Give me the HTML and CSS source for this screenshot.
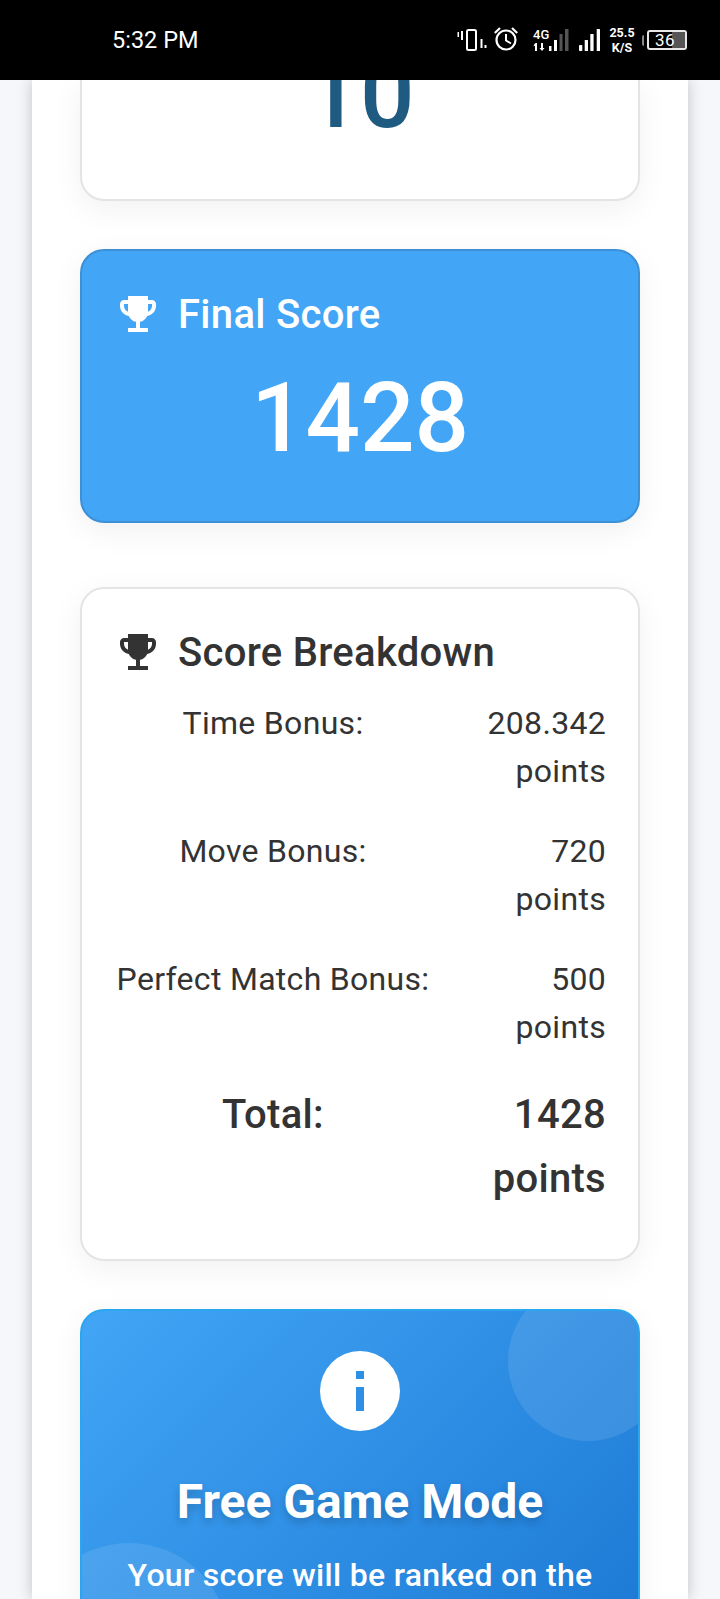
FILE: index.html
```html
<!DOCTYPE html>
<html lang="en">
<head>
<meta charset="utf-8">
<title>Game Result</title>
<link rel="stylesheet" href="styles.css">
</head>
<body>
<header class="status">
  <span class="time">5:32 PM</span>
  <div class="status-icons">
    <svg class="ic-vib" viewBox="0 0 30 24" width="30" height="24"><g fill="#fff"><rect x=".5" y="4" width="1.500" height="5"/><rect x="4" y="3" width="2" height="9"/><rect x="23.500" y="11" width="2" height="9"/><rect x="27.500" y="17" width="2" height="3"/></g><rect x="10" y="2" width="9" height="20" rx="1.500" fill="none" stroke="#fff" stroke-width="2"/></svg>
    <svg class="ic-alarm" viewBox="0 0 24 26" width="24" height="26"><circle cx="12" cy="14" r="9.500" fill="none" stroke="#fff" stroke-width="2.200"/><path d="M12 8v6.500l5 3" fill="none" stroke="#fff" stroke-width="2"/><path d="M.8 7 6 2M23.200 7 18 2" stroke="#fff" stroke-width="2.200"/></svg>
    <div class="net">
      <span class="net-4g">4G</span>
      <svg viewBox="0 0 37 24" width="37" height="24"><g fill="#fff"><path d="M3 23v-5.500L1.800 18.500v-1.500L3.500 15H5v8z"/><path d="M9 15h2v5h1.500L10 23l-2.500-3H9z"/><rect x="17" y="18" width="2.500" height="5"/><rect x="22" y="12" width="3" height="11"/></g><g fill="#555"><rect x="27.500" y="6" width="3" height="17"/><rect x="33" y="1" width="3.500" height="22"/></g></svg>
    </div>
    <svg class="ic-sig" viewBox="0 0 21 22" width="21" height="22"><g fill="#fff"><rect x="0" y="16" width="3.300" height="6" rx=".8"/><rect x="5.700" y="11" width="3.300" height="11" rx=".5"/><rect x="11.300" y="5" width="3.300" height="17" rx=".5"/><rect x="17.700" y="0" width="3.300" height="22" rx=".5"/></g></svg>
    <div class="speed"><span>25.5</span><span>K/S</span></div>
    <div class="battery"><span class="bat-cap"></span><div class="bat-body"><span class="bat-fill"></span><span class="bat-num">36</span></div></div>
  </div>
</header>
<div class="page">
  <main class="container">
    <section class="card stub"><div class="stub-value">10</div></section>

    <section class="card final">
      <h2 class="card-title">
        <svg class="trophy" viewBox="3 3 18 18"><path fill="currentColor" d="M19 5h-2V3H7v2H5c-1.100 0-2 .9-2 2v1c0 2.550 1.920 4.630 4.390 4.940.63 1.500 1.980 2.630 3.610 2.960V19H7v2h10v-2h-4v-3.100c1.630-.33 2.980-1.460 3.610-2.960C19.080 12.630 21 10.550 21 8V7c0-1.100-.9-2-2-2zM5 8V7h2v3.820C5.840 10.400 5 9.300 5 8zm14 0c0 1.300-.84 2.400-2 2.820V7h2v1z"/></svg>
        Final Score
      </h2>
      <div class="final-value">1428</div>
    </section>

    <section class="card breakdown">
      <h2 class="card-title">
        <svg class="trophy" viewBox="3 3 18 18"><path fill="currentColor" d="M19 5h-2V3H7v2H5c-1.100 0-2 .9-2 2v1c0 2.550 1.920 4.630 4.390 4.940.63 1.500 1.980 2.630 3.610 2.960V19H7v2h10v-2h-4v-3.100c1.630-.33 2.980-1.460 3.610-2.960C19.080 12.630 21 10.550 21 8V7c0-1.100-.9-2-2-2zM5 8V7h2v3.820C5.840 10.400 5 9.300 5 8zm14 0c0 1.300-.84 2.400-2 2.820V7h2v1z"/></svg>
        Score Breakdown
      </h2>
      <div class="row"><span class="label">Time Bonus:</span><span class="value">208.342 points</span></div>
      <div class="row"><span class="label">Move Bonus:</span><span class="value">720 points</span></div>
      <div class="row"><span class="label">Perfect Match Bonus:</span><span class="value">500 points</span></div>
      <div class="row total"><span class="label">Total:</span><span class="value">1428 points</span></div>
    </section>

    <section class="card free">
      <span class="blob blob-a"></span>
      <span class="blob blob-b"></span>
      <div class="info-icon"><span class="info-dot"></span><span class="info-stem"></span></div>
      <h2 class="free-title">Free Game Mode</h2>
      <p class="free-text">Your score will be ranked on the leaderboard</p>
    </section>
  </main>
</div>
</body>
</html>
```
FILE: styles.css
```css
* { box-sizing: border-box; }
html, body { margin: 0; height: 1599px; overflow: hidden; }
body { background: #f5f7fb; font-family: Roboto, sans-serif; color: #333; line-height: 1.6; letter-spacing: .3px; display: flex; flex-direction: column; }

.status { height: 80px; flex: none; background: #000; color: #fff; display: flex; align-items: center; justify-content: space-between; position: relative; z-index: 2; padding: 0 33px 0 112px; letter-spacing: 0; }
.time { font-size: 23.500px; line-height: 1; margin-top: 2px; }
.status-icons { display: flex; align-items: center; }
.ic-alarm { margin-left: 7px; margin-top: -2px; }
.net { position: relative; width: 37px; height: 24px; margin-left: 14px; }
.net svg { display: block; }
.net-4g { position: absolute; left: 1px; top: 0; font-size: 13px; font-weight: 500; line-height: 13px; }
.ic-sig { margin-left: 10px; }
.speed { display: flex; flex-direction: column; align-items: center; width: 26px; margin-left: 9px; font-size: 12.500px; font-weight: 700; line-height: 15px; }
.battery { display: flex; align-items: center; gap: 3px; margin-left: 7px; }
.bat-cap { width: 2px; height: 11px; background: #888; border-radius: 2px 0 0 2px; }
.bat-body { width: 40px; height: 20px; border: 2px solid #e8e8e8; border-radius: 3px; position: relative; display: flex; justify-content: center; align-items: center; padding-right: 4px; }
.bat-fill { position: absolute; right: 0; top: 0; bottom: 0; width: 13px; background: #555; }
.bat-num { position: relative; font-size: 17px; line-height: 1; letter-spacing: .5px; }

.page { flex: 1; min-height: 0; }
.container { width: 656px; margin: 0 auto 0 32px; height: 100%; background: #fff; box-shadow: 0 0 14px rgba(0,0,0,.22); padding: 0 48px; display: flex; flex-direction: column; gap: 48px; overflow: hidden; }

.card { flex: none; border: 2px solid #e4e4e4; border-radius: 24px; background: #fff; padding: 32px; box-shadow: 0 8px 32px rgba(0,0,0,.06); }

.stub { height: 122px; margin-top: -1px; border-top: 0; border-top-left-radius: 0; border-top-right-radius: 0; padding: 0; overflow: hidden; text-align: center; }
.stub-value { font-size: 96px; font-weight: 500; line-height: 1; color: #1f5a80; margin-top: -33px; letter-spacing: 0; }

.card-title { display: flex; align-items: center; gap: 22px; margin: 0 0 14px; font-size: 40px; font-weight: 500; line-height: 64px; padding-left: 6px; }
.trophy { width: 36px; height: 36px; flex: none; margin-top: -2px; }

.final { height: 274px; margin-bottom: 16px; background: #42a5f5; border-color: #3d8fd6; color: #fff; }
.final-value { font-size: 96px; line-height: 1.2; text-align: center; font-weight: 500; letter-spacing: 0; }

.row { display: grid; grid-template-columns: 318px 1fr; font-size: 32px; line-height: 48px; margin-bottom: 32px; }
.label { text-align: center; }
.value { width: 125px; justify-self: end; text-align: right; }
.total { font-size: 40px; font-weight: 500; line-height: 64px; margin-bottom: 16px; }

.free { position: relative; overflow: hidden; height: 400px; padding: 40px 32px; border-color: #29a6ee; background: linear-gradient(135deg, #42a5f5, #1976d2); color: #fff; text-align: center; }
.blob { position: absolute; border-radius: 50%; background: rgba(255,255,255,.1); }
.blob-a { width: 160px; height: 160px; top: -30px; right: -30px; }
.blob-b { width: 200px; height: 200px; top: 232px; left: -53px; }
.info-icon { position: relative; width: 80px; height: 80px; border-radius: 50%; background: #fff; margin: 0 auto; display: flex; flex-direction: column; align-items: center; padding-top: 20px; gap: 8px; }
.info-dot { width: 8px; height: 8px; background: #2f8fe6; }
.info-stem { width: 8px; height: 24px; background: #2f8fe6; }
.free-title { position: relative; margin: 42px 0 0; font-size: 48px; font-weight: 700; line-height: 1.2; letter-spacing: 0; text-shadow: 0 4px 8px rgba(0,0,0,.2); }
.free-text { position: relative; margin: 20px 0 0; font-size: 32px; font-weight: 500; line-height: 1.5; }
```
